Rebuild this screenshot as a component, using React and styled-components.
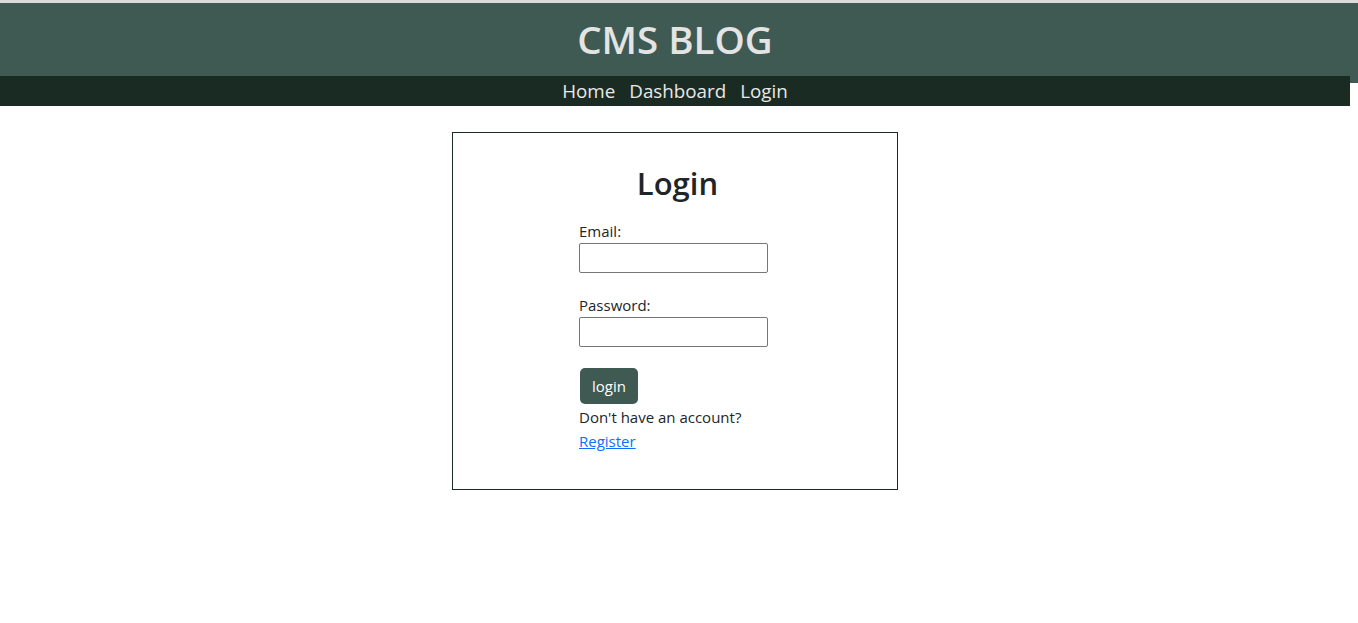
import React from 'react';
import styled, { createGlobalStyle } from 'styled-components';

const GlobalStyle = createGlobalStyle`
  body {
    margin: 0;
    font-family: "Segoe UI", "Open Sans", "Noto Sans", sans-serif;
    font-size: 16px;
    line-height: 1.5;
    color: #212529;
    background: #ffffff;
  }
`;

const Page = styled.div`
  width: calc(100% - 8px);
`;

const Header = styled.header`
  margin-right: -8px;
  border-top: 3px solid #dcdcdc;
  height: 80px;
  background: #3e5a53;
  display: flex;
  justify-content: center;
  padding-right: 8px;
`;

const Title = styled.h1`
  margin: 13px 0 0;
  font-size: 38.5px;
  font-weight: 600;
  line-height: 1.2;
  color: #e4e4e4;
`;

const Nav = styled.nav`
  position: relative;
  margin-top: -7px;
  height: 30px;
  background: #1a2b23;
  display: flex;
  justify-content: center;
  align-items: center;
  gap: 14px;
`;

const NavLink = styled.a`
  color: #e8e8e8;
  font-size: 18.8px;
  text-decoration: none;
  line-height: 30px;
`;

const Card = styled.section`
  width: 444px;
  margin: 26px auto 0;
  border: 1px solid #1a2b23;
  padding: 30px 0 36px;
`;

const Heading = styled.h2`
  margin: 0 0 16px;
  padding-left: 5px;
  text-align: center;
  font-size: 31px;
  font-weight: 600;
  line-height: 40px;
`;

const Form = styled.form`
  width: 192px;
  margin: 0 auto;
  display: flex;
  flex-direction: column;
  align-items: flex-start;
`;

const Field = styled.div`
  display: flex;
  flex-direction: column;
  margin-bottom: ${p => p.$gap}px;
`;

const Label = styled.label`
  font-size: 15px;
  line-height: 24px;
`;

const Input = styled.input`
  box-sizing: border-box;
  width: 189px;
  height: 30px;
  border: 1px solid #767676;
  border-radius: 2px;
  font: inherit;
`;

const Button = styled.button`
  width: 58px;
  height: 36px;
  margin-left: 1px;
  border: none;
  border-radius: 5px;
  background: #3e5a53;
  color: #ffffff;
  font-family: inherit;
  font-size: 15px;
  padding: 0;
`;

const Text = styled.p`
  margin: 1px 0 0;
  font-size: 15px;
  line-height: 24px;
  white-space: nowrap;
`;

const Link = styled.a`
  font-size: 15px;
  line-height: 24px;
  color: #0d6efd;
  text-decoration: underline;
`;

export default function App() {
  return (
    <Page>
      <GlobalStyle />
      <Header>
        <Title>CMS BLOG</Title>
      </Header>
      <Nav>
        <NavLink href="#">Home</NavLink>
        <NavLink href="#">Dashboard</NavLink>
        <NavLink href="#">Login</NavLink>
      </Nav>
      <Card>
        <Heading>Login</Heading>
        <Form onSubmit={e => e.preventDefault()}>
          <Field $gap={20}>
            <Label htmlFor="email">Email:</Label>
            <Input id="email" type="email" />
          </Field>
          <Field $gap={21}>
            <Label htmlFor="password">Password:</Label>
            <Input id="password" type="password" />
          </Field>
          <Button type="submit">login</Button>
          <Text>Don't have an account?</Text>
          <Link href="#">Register</Link>
        </Form>
      </Card>
    </Page>
  );
}
